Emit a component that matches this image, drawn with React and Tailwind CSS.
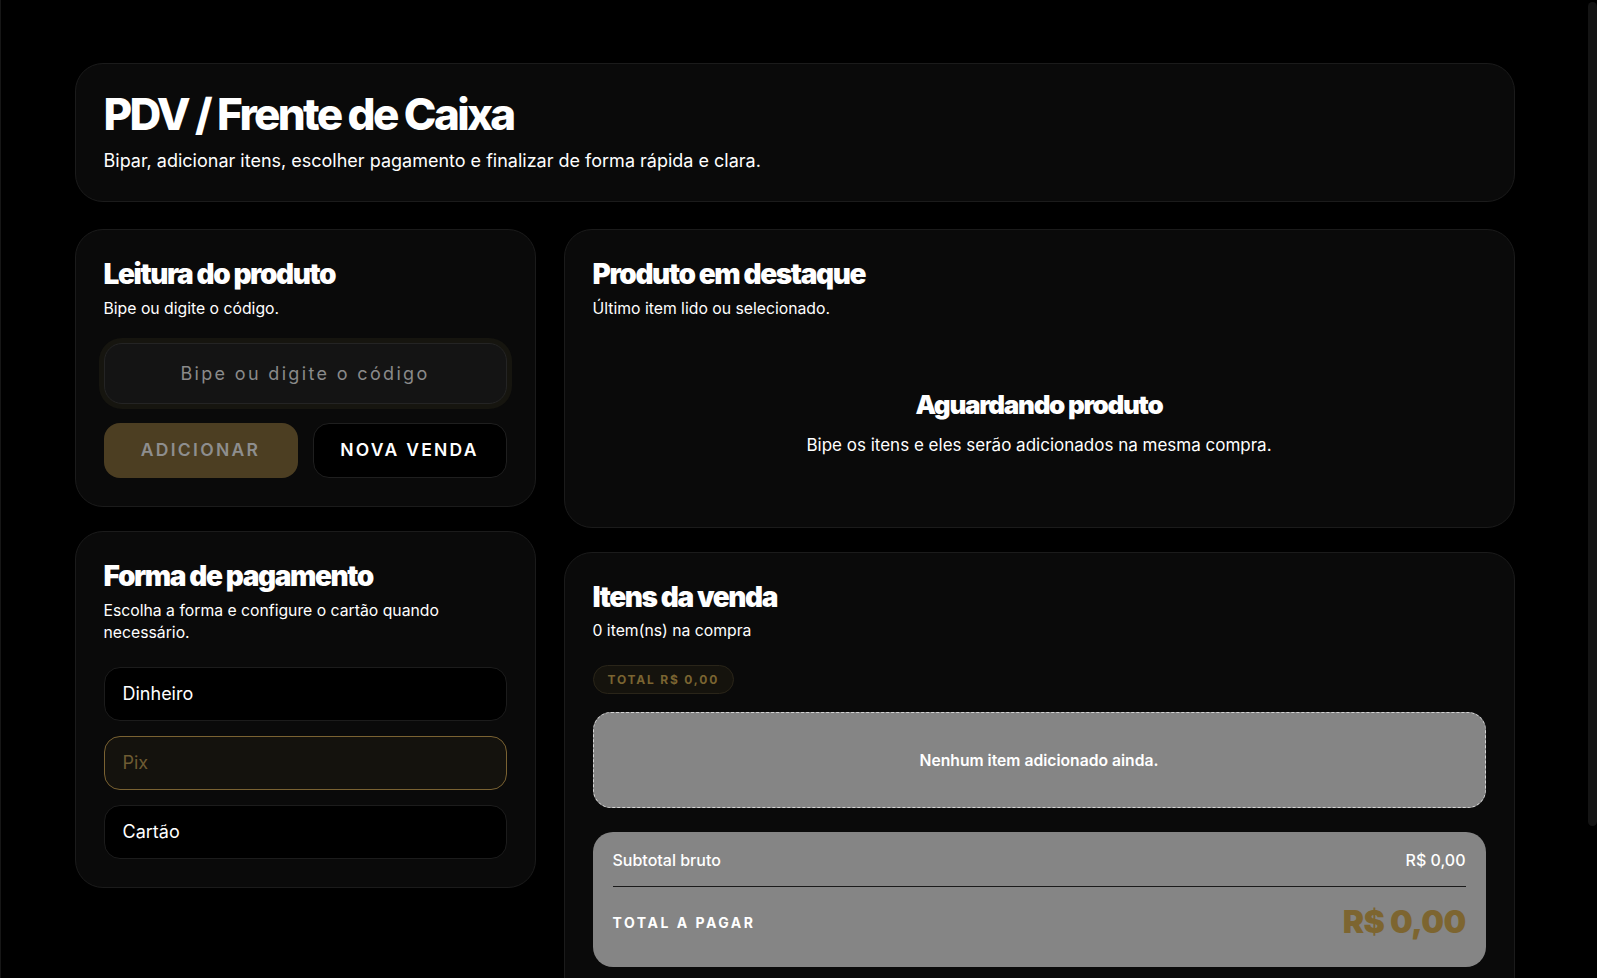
import React from "react";

function Card({ children, className = "" }) {
  return (
    <section
      className={
        "rounded-[28px] border border-[#1b1b1b] bg-[#0a0a0a] p-7 " + className
      }
    >
      {children}
    </section>
  );
}

function CardTitle({ title, subtitle }) {
  return (
    <div>
      <h2 className="text-[28px] font-black leading-[1.2] tracking-[-0.05em] text-white">
        {title}
      </h2>
      <p className="mt-[6px] text-[15.75px] leading-[1.4] text-white">{subtitle}</p>
    </div>
  );
}

export default function App() {
  return (
    <div className="flex h-screen overflow-hidden border-l border-[#161616] bg-black font-['Inter','Noto_Sans',sans-serif] text-white">
      <main className="min-w-0 flex-1 overflow-hidden">
        <div className="mx-auto max-w-[1440px] pt-[63px] pb-[63px]">
          <header className="rounded-[28px] border border-[#1b1b1b] bg-[#0a0a0a] px-7 pt-[26px] pb-[27px]">
            <h1 className="text-[44px] font-extrabold leading-[1.1] tracking-[-0.06em] text-white">
              PDV / Frente de Caixa
            </h1>
            <p className="mt-[9px] text-[18px] leading-[1.5] text-white">
              Bipar, adicionar itens, escolher pagamento e finalizar de forma rápida e clara.
            </p>
          </header>

          <div className="mt-[27px] grid grid-cols-[461px_1fr] items-start gap-7">
            <div className="flex flex-col gap-6">
              <Card>
                <CardTitle title="Leitura do produto" subtitle="Bipe ou digite o código." />
                <div className="mt-[23px] flex h-[61px] items-center justify-center rounded-[18px] border border-[#242424] bg-[#141414] shadow-[0_0_0_5px_#16150f]">
                  <span className="text-[18px] tracking-[0.13em] text-[#8a8a8a]">
                    Bipe ou digite o código
                  </span>
                </div>
                <div className="mt-[19px] grid grid-cols-2 gap-[15px]">
                  <button className="flex h-[55px] items-center justify-center rounded-[16px] bg-[#4c3e22] text-[17.5px] font-semibold tracking-[0.13em] text-[#8e8e8e]">
                    ADICIONAR
                  </button>
                  <button className="flex h-[55px] items-center justify-center rounded-[16px] border border-[#1f1f1f] bg-black text-[17.5px] font-semibold tracking-[0.13em] text-white">
                    NOVA VENDA
                  </button>
                </div>
              </Card>

              <Card>
                <CardTitle
                  title="Forma de pagamento"
                  subtitle="Escolha a forma e configure o cartão quando necessário."
                />
                <div className="mt-[23px] flex flex-col gap-[15px]">
                  <div className="flex h-[54px] items-center rounded-[16px] border border-[#1c1c1c] bg-black px-[18px] text-[18px] text-white">
                    Dinheiro
                  </div>
                  <div className="flex h-[54px] items-center rounded-[16px] border border-[#7a6232] bg-[#14120d] px-[18px] text-[18px] text-[#6e5b32]">
                    Pix
                  </div>
                  <div className="flex h-[54px] items-center rounded-[16px] border border-[#1c1c1c] bg-black px-[18px] text-[18px] text-white">
                    Cartão
                  </div>
                </div>
              </Card>
            </div>

            <div className="flex flex-col gap-6">
              <Card>
                <CardTitle title="Produto em destaque" subtitle="Último item lido ou selecionado." />
                <div className="mt-6 pt-[45px] pb-[40px] text-center">
                  <h3 className="text-[26px] font-black leading-[1.2] tracking-[-0.05em] text-white">
                    Aguardando produto
                  </h3>
                  <p className="mt-[13px] text-[17px] leading-[1.5] text-white">
                    Bipe os itens e eles serão adicionados na mesma compra.
                  </p>
                </div>
              </Card>

              <Card>
                <CardTitle title="Itens da venda" subtitle="0 item(ns) na compra" />
                <div className="mt-[23px] flex">
                  <span className="inline-flex h-[29px] items-center rounded-full border border-[#2a2519] bg-[#15130d] px-[14px] text-[12px] font-bold tracking-[0.15em] text-[#7a6431]">
                    TOTAL R$ 0,00
                  </span>
                </div>
                <div className="mt-[18px] flex h-[96px] items-center justify-center rounded-[18px] border border-dashed border-[#d4d4d4] bg-[#858585] text-[15.7px] font-semibold text-white">
                  Nenhum item adicionado ainda.
                </div>
                <div className="mt-6 rounded-[20px] bg-[#858585] px-5 pt-4 pb-[25px]">
                  <div className="flex items-center justify-between text-[16px] font-medium leading-[1.5] text-white">
                    <span>Subtotal bruto</span>
                    <span>R$ 0,00</span>
                  </div>
                  <div className="mt-[14px] h-px bg-[#1a1a1a]" />
                  <div className="mt-[16px] flex items-center justify-between">
                    <span className="text-[14px] font-bold tracking-[0.18em] text-white">
                      TOTAL A PAGAR
                    </span>
                    <span className="text-[32px] font-black leading-[1.2] tracking-[-0.02em] text-[#7d6530]">
                      R$ 0,00
                    </span>
                  </div>
                </div>
                <button className="mt-4 flex h-[58px] w-full items-center justify-center rounded-[16px] bg-[#4c3e22] text-[17.5px] font-semibold tracking-[0.13em] text-[#8e8e8e]">
                  FINALIZAR VENDA
                </button>
                <p className="mt-3 text-center text-[13px] leading-[17px] text-[#8a8a8a]">
                  Adicione itens para finalizar a venda.
                </p>
              </Card>
            </div>
          </div>
        </div>
      </main>
      <aside className="flex w-[9px] shrink-0 flex-col bg-black">
        <div className="mt-[2px] h-[824px] rounded-full bg-[#141414]" />
      </aside>
    </div>
  );
}
